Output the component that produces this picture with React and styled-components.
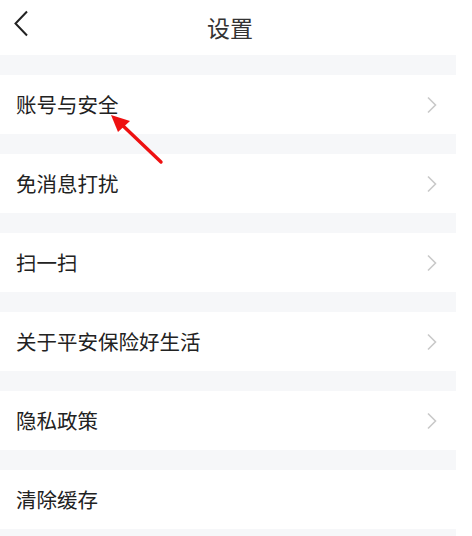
import React from "react";
import styled, { createGlobalStyle } from "styled-components";

const GlobalStyle = createGlobalStyle`
  html, body {
    margin: 0;
    padding: 0;
    background: #ffffff;
  }
  body {
    font-family: "Noto Sans CJK SC", "Noto Sans", sans-serif;
  }
`;

const Page = styled.div`
  position: relative;
  width: 456px;
  height: 536px;
  overflow: hidden;
  background: #f6f7f9;
`;

const Header = styled.div`
  height: 55px;
  display: flex;
  align-items: center;
  justify-content: center;
  position: relative;
  background: #ffffff;
`;

const BackButton = styled.div`
  position: absolute;
  left: 12px;
  top: 10px;
  width: 20px;
  height: 30px;
`;

const Title = styled.h1`
  margin: 0 0 0 4px;
  font-size: 23px;
  font-weight: 400;
  color: #333333;
  line-height: 1;
`;

const List = styled.div`
  display: flex;
  flex-direction: column;
  gap: 20px;
  padding-top: 20px;
`;

const Row = styled.div`
  height: 59px;
  background: #ffffff;
  display: flex;
  align-items: center;
  justify-content: space-between;
  padding: 0 18px 0 16px;
`;

const Label = styled.span`
  font-size: 20.5px;
  color: #222222;
  line-height: 1;
  margin-top: -1px;
`;

const Arrow = styled.svg`
  position: absolute;
  left: 0;
  top: 0;
  pointer-events: none;
`;

const Chevron = () => (
  <svg width="12" height="18" viewBox="0 0 12 18">
    <path d="M2 1.5 L9.5 9 L2 16.5" fill="none" stroke="#c9c9c9" strokeWidth="1.6" />
  </svg>
);

const items = [
  { label: "账号与安全", arrow: true },
  { label: "免消息打扰", arrow: true },
  { label: "扫一扫", arrow: true },
  { label: "关于平安保险好生活", arrow: true },
  { label: "隐私政策", arrow: true },
  { label: "清除缓存", arrow: false },
];

export default function App() {
  return (
    <>
      <GlobalStyle />
      <Page>
        <Header>
          <BackButton>
            <svg width="20" height="30" viewBox="0 0 20 30">
              <path d="M15 1.5 L3.5 13.5 L15 25.5" fill="none" stroke="#222" strokeWidth="2" />
            </svg>
          </BackButton>
          <Title>设置</Title>
        </Header>
        <List>
          {items.map((it) => (
            <Row key={it.label}>
              <Label>{it.label}</Label>
              {it.arrow && <Chevron />}
            </Row>
          ))}
        </List>
        <Arrow width="456" height="536" viewBox="0 0 456 536">
          <line x1="161" y1="162" x2="119" y2="122" stroke="#ee1111" strokeWidth="3.4" strokeLinecap="round" />
          <polygon points="111,115 130,121 118,132" fill="#ee1111" />
        </Arrow>
      </Page>
    </>
  );
}
